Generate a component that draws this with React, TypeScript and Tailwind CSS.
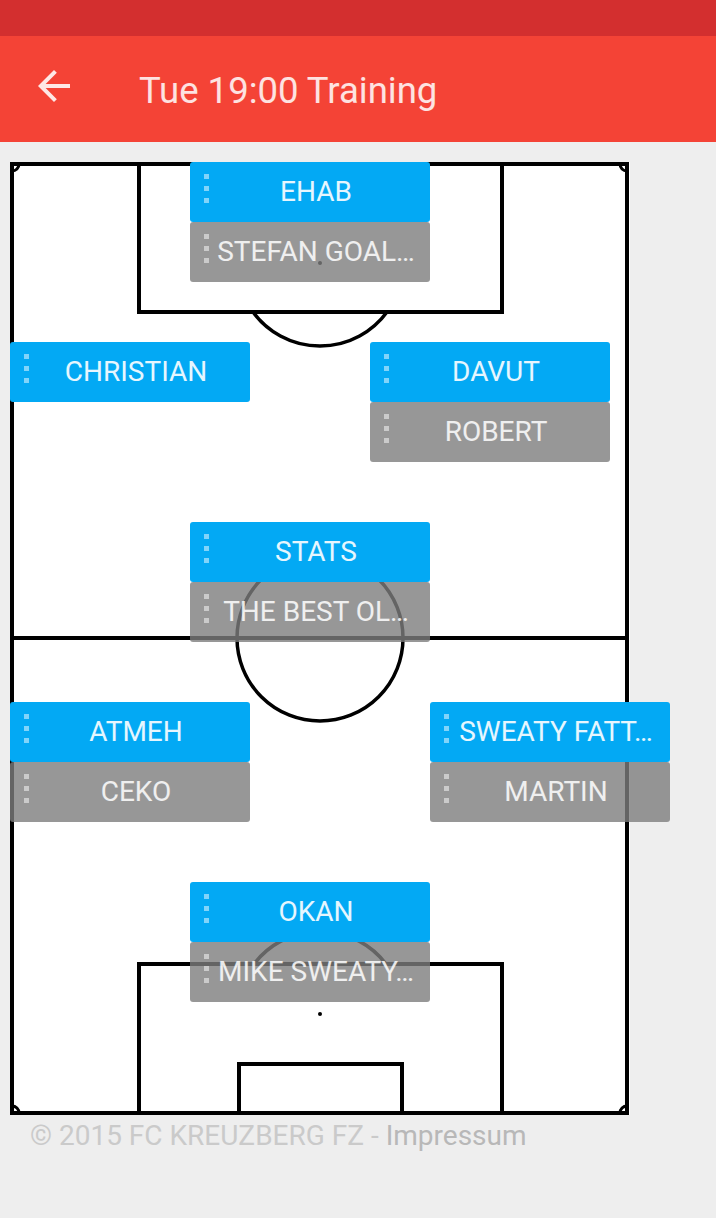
import React from "react";

type Slot = { x: number; y: number; top: string; bottom?: string };

const slots: Slot[] = [
  { x: 180, y: 0, top: "EHAB", bottom: "STEFAN GOAL…" },
  { x: 0, y: 180, top: "CHRISTIAN" },
  { x: 360, y: 180, top: "DAVUT", bottom: "ROBERT" },
  { x: 180, y: 360, top: "STATS", bottom: "THE BEST OL…" },
  { x: 0, y: 540, top: "ATMEH", bottom: "CEKO" },
  { x: 420, y: 540, top: "SWEATY FATT…", bottom: "MARTIN" },
  { x: 180, y: 720, top: "OKAN", bottom: "MIKE SWEATY…" },
];

function Handle() {
  return (
    <div className="absolute left-[14px] top-[12px] flex flex-col gap-[7px]">
      <span className="block w-[5px] h-[5px] bg-white/50" />
      <span className="block w-[5px] h-[5px] bg-white/50" />
      <span className="block w-[5px] h-[5px] bg-white/50" />
    </div>
  );
}

function Card({ label, kind }: { label: string; kind: "blue" | "gray" }) {
  const cls =
    kind === "blue"
      ? "bg-[#03A9F4] text-white/90"
      : "bg-[rgba(125,125,125,0.8)] text-white/85";
  return (
    <div className={`relative h-[60px] w-[240px] rounded-[3px] flex items-center ${cls}`}>
      <Handle />
      <div className="w-full pl-[14px] pr-[2px] text-center text-[28px] leading-[32px] whitespace-nowrap">
        {label}
      </div>
    </div>
  );
}

function Field() {
  return (
    <svg
      width="620"
      height="953"
      viewBox="0 0 620 953"
      className="block"
      fill="none"
      stroke="#000"
    >
      <rect x="0" y="0" width="620" height="953" fill="#fff" stroke="none" />
      <rect x="2" y="2" width="615" height="949" strokeWidth="4" />
      <path d="M2 9 A7 7 0 0 0 9 2" strokeWidth="3" />
      <path d="M610 2 A7 7 0 0 0 617 9" strokeWidth="3" />
      <path d="M2 944 A7 7 0 0 1 9 951" strokeWidth="3" />
      <path d="M610 951 A7 7 0 0 1 617 944" strokeWidth="3" />
      <rect x="129" y="2" width="363" height="148" strokeWidth="4" />
      <circle cx="310" cy="101" r="2" fill="#000" stroke="none" />
      <path d="M243 150 A83 83 0 0 0 377 150" strokeWidth="3.5" />
      <line x1="2" y1="476" x2="617" y2="476" strokeWidth="4" />
      <circle cx="310" cy="476" r="83" strokeWidth="3.5" />
      <rect x="129" y="802" width="363" height="149" strokeWidth="4" />
      <rect x="229" y="902" width="163" height="49" strokeWidth="4" />
      <circle cx="310" cy="852" r="2" fill="#000" stroke="none" />
      <path d="M244 802 A83 83 0 0 1 376 802" strokeWidth="3.5" />
    </svg>
  );
}

export default function App() {
  return (
    <div
      className="min-h-[1218px] w-[716px] bg-[#EEEEEE]"
      style={{ fontFamily: "Roboto, 'Noto Sans', sans-serif" }}
    >
      <div className="h-[36px] bg-[#D32F2F]" />
      <div className="h-[106px] bg-[#F44336] flex items-center">
        <svg
          width="48"
          height="48"
          viewBox="0 0 24 24"
          className="ml-[30px] -mt-[6px]"
          fill="rgba(255,255,255,0.88)"
        >
          <path d="M20 11H7.83l5.59-5.59L12 4l-8 8 8 8 1.41-1.41L7.83 13H20v-2z" />
        </svg>
        <div className="ml-[61px] mt-[4px] text-[36.5px] text-white/85 leading-none">
          Tue 19:00 Training
        </div>
      </div>
      <div className="pt-[20px] pl-[10px]">
        <div className="relative w-[620px] h-[953px]">
          <Field />
          {slots.map((s) => (
            <div
              key={s.top}
              className="absolute flex flex-col"
              style={{ left: s.x, top: s.y }}
            >
              <Card label={s.top} kind="blue" />
              {s.bottom && <Card label={s.bottom} kind="gray" />}
            </div>
          ))}
        </div>
      </div>
      <div className="pl-[30px] pt-[5px] text-[28px] leading-[32px] text-[#cacaca]">
        © 2015 FC KREUZBERG FZ - <span className="text-[#b8b8b8]">Impressum</span>
      </div>
    </div>
  );
}
